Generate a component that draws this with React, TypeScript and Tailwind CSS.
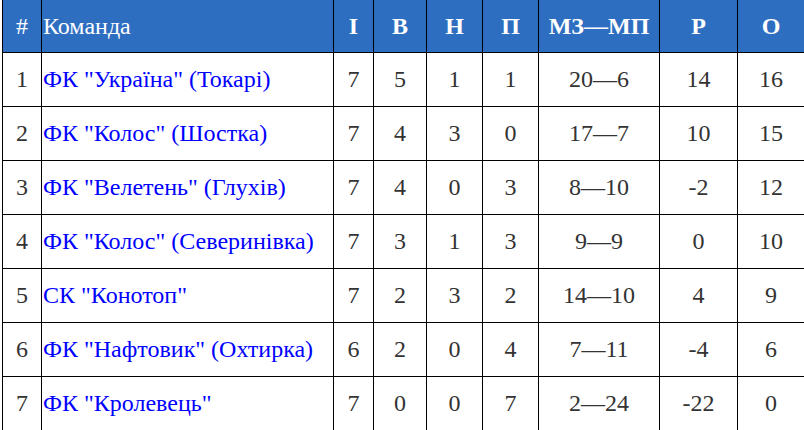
const rows = [
  { n: 1, team: 'ФК "Україна" (Токарі)', i: 7, w: 5, d: 1, l: 1, g: "20—6", r: "14", p: 16 },
  { n: 2, team: 'ФК "Колос" (Шостка)', i: 7, w: 4, d: 3, l: 0, g: "17—7", r: "10", p: 15 },
  { n: 3, team: 'ФК "Велетень" (Глухів)', i: 7, w: 4, d: 0, l: 3, g: "8—10", r: "-2", p: 12 },
  { n: 4, team: 'ФК "Колос" (Северинівка)', i: 7, w: 3, d: 1, l: 3, g: "9—9", r: "0", p: 10 },
  { n: 5, team: 'СК "Конотоп"', i: 7, w: 2, d: 3, l: 2, g: "14—10", r: "4", p: 9 },
  { n: 6, team: 'ФК "Нафтовик" (Охтирка)', i: 6, w: 2, d: 0, l: 4, g: "7—11", r: "-4", p: 6 },
  { n: 7, team: 'ФК "Кролевець"', i: 7, w: 0, d: 0, l: 7, g: "2—24", r: "-22", p: 0 },
];

const heads = ["І", "В", "Н", "П", "МЗ—МП", "Р", "О"];

export default function App() {
  return (
    <div className="w-[804px] h-[430px] overflow-hidden bg-white font-['Liberation_Serif','Times_New_Roman',serif] text-[24px] leading-none">
      <table className="ml-[2px] w-[802px] border-collapse table-fixed">
        <colgroup>
          <col className="w-[39px]" />
          <col className="w-[292px]" />
          <col className="w-[40px]" />
          <col className="w-[53px]" />
          <col className="w-[56px]" />
          <col className="w-[56px]" />
          <col className="w-[121px]" />
          <col className="w-[78px]" />
          <col className="w-[67px]" />
        </colgroup>
        <thead>
          <tr className="h-[52px] bg-[#2e6ec0] text-white">
            <th className="border-x border-b border-black font-normal text-center">#</th>
            <th className="border-x border-b border-black font-normal text-left pl-[1px]">Команда</th>
            {heads.map((h) => (
              <th key={h} className="border-x border-b border-black font-bold text-center whitespace-nowrap">
                {h}
              </th>
            ))}
          </tr>
        </thead>
        <tbody className="text-[#333]">
          {rows.map((row) => (
            <tr key={row.n} className="h-[54px]">
              <td className="border border-black text-center">{row.n}</td>
              <td className="border border-black text-left pl-[1px] whitespace-nowrap">
                <a href="#" className="text-[#0000ff]">{row.team}</a>
              </td>
              <td className="border border-black text-center">{row.i}</td>
              <td className="border border-black text-center">{row.w}</td>
              <td className="border border-black text-center">{row.d}</td>
              <td className="border border-black text-center">{row.l}</td>
              <td className="border border-black text-center whitespace-nowrap">{row.g}</td>
              <td className="border border-black text-center">{row.r}</td>
              <td className="border border-black text-center">{row.p}</td>
            </tr>
          ))}
        </tbody>
      </table>
    </div>
  );
}
